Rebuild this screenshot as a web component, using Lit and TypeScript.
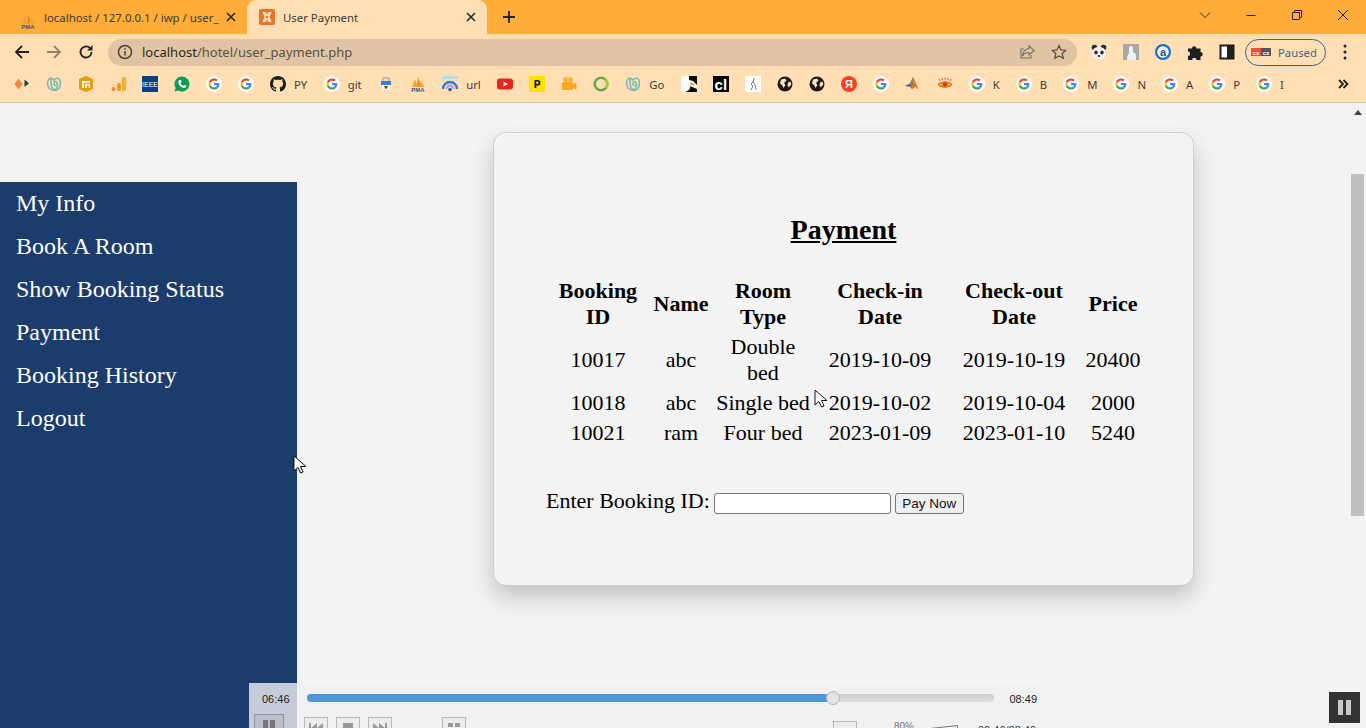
import { LitElement, html, css, svg } from "lit";
import { customElement } from "lit/decorators.js";

const G = html`<svg class="ico" viewBox="0 0 16 16"><circle cx="8" cy="8" r="8" fill="#fff"/><g transform="translate(2.4 2.4) scale(.233)"><path fill="#EA4335" d="M24 9.5c3.54 0 6.71 1.22 9.21 3.6l6.85-6.85C35.9 2.38 30.47 0 24 0 14.62 0 6.51 5.38 2.56 13.22l7.98 6.19C12.43 13.72 17.74 9.5 24 9.5z"/><path fill="#4285F4" d="M46.98 24.55c0-1.57-.15-3.09-.38-4.55H24v9.02h12.94c-.58 2.96-2.26 5.48-4.78 7.18l7.73 6c4.51-4.18 7.09-10.36 7.09-17.65z"/><path fill="#FBBC05" d="M10.53 28.59c-.48-1.45-.76-2.99-.76-4.59s.27-3.14.76-4.59l-7.98-6.19C.92 16.46 0 20.12 0 24c0 3.88.92 7.54 2.56 10.78l7.97-6.19z"/><path fill="#34A853" d="M24 48c6.48 0 11.93-2.13 15.89-5.81l-7.73-6c-2.15 1.45-4.92 2.3-8.16 2.3-6.26 0-11.57-4.22-13.47-9.91l-7.98 6.19C6.51 42.62 14.62 48 24 48z"/></g></svg>`;

const pma = (cls = "ico") => html`<svg class=${cls} viewBox="0 0 16 16"><path d="M2 11 5 3l1.5 5L8 1l2 7 1-4 3 7z" fill="#f5a623"/><path d="M8 1l2 7-2 3z" fill="#e8842a"/><text x="8" y="15.5" font-size="6" font-weight="700" font-family="Liberation Sans" text-anchor="middle" fill="#45507a">PMA</text></svg>`;

const wp = html`<svg class="ico" viewBox="0 0 16 16" fill="none" stroke="#78b9b9" stroke-width="1.6"><path d="M8 14.5C4 14.5 1.5 11 1.5 7.5 1.5 4 3.5 1.8 5.5 2.2 7 2.5 8 4 8 4s1.2-1.6 3-1.8c2.4-.2 3.6 2.2 3.4 5C14.2 11.500 12 14.500 8 14.500z"/><path d="M5.500 2.500C4.500 6 5 11 8 14.500M8 14.500c3-2 3.800-5.500 3-8-.5-1.500-2.500-1.500-3 .5-.3 1.200.5 2.500 1.800 2.500"/></svg>`;

const globe = html`<svg class="ico" viewBox="0 0 16 16"><circle cx="8" cy="8" r="7.500" fill="#1b1b1b"/><path d="M4 3.500 8 2.500l1.500 2-2.500 2.500 1.500 2L6.500 12 5 9 3 7.500zM11 6.500l2.500-1 .8 3-2.500 3-1.300-2.500z" fill="#f6e2c0"/></svg>`;

const icons: Record<string, unknown> = {
  G,
  wp,
  globe,
  pma: pma(),
  diamond: html`<svg class="ico" viewBox="0 0 16 16"><path d="M4.500 2.500 8.500 8 4.500 13.500 .5 8z" fill="#f2883c"/><path d="M10.500 3.500 15 7.500l-4.500 3.500z" fill="#27424a"/></svg>`,
  hex: html`<svg class="ico" viewBox="0 0 16 16"><path d="M8 0 15 3v10l-7 3-7-3V3z" fill="#e39a16"/><path d="M4 5h8v2H6v5H4zM7 8h5v4h-1.300V9.500H9V12H7z" fill="#fff3d8"/></svg>`,
  bars: html`<svg class="ico" viewBox="0 0 16 16"><circle cx="3.500" cy="13" r="2" fill="#f08a2a"/><rect x="7" y="7" width="4" height="8" rx="1.500" fill="#f2992e"/><rect x="12" y="1" width="4" height="14" rx="1.500" fill="#f9ab2d"/></svg>`,
  ieee: html`<span class="ieee">IEEE</span>`,
  wa: html`<svg class="ico" viewBox="0 0 16 16"><path d="M8 .500a7.500 7.500 0 0 0-6.400 11.400L.5 15.500l3.700-1A7.500 7.500 0 1 0 8 .500z" fill="#0b9c55"/><path d="M5.500 4c-.6.300-1.300 1-1.200 2.200.2 2.700 3 5.500 5.700 5.700 1.200.1 1.900-.7 2.200-1.300.1-.4.100-.7 0-.8L10.500 9c-.3-.1-.5-.1-.7.200l-.6.700c-1.300-.5-2.300-1.500-2.800-2.800l.7-.6c.2-.2.300-.4.200-.7L7.100 4.200C6.900 3.900 6 3.800 5.500 4z" fill="#fff"/></svg>`,
  gh: html`<svg class="ico" viewBox="0 0 16 16"><path fill="#1b1f23" d="M8 0C3.580 0 0 3.580 0 8c0 3.540 2.290 6.530 5.470 7.590.4.070.55-.17.55-.38 0-.19-.01-.82-.01-1.490-2.010.37-2.530-.49-2.690-.94-.09-.23-.48-.94-.82-1.130-.28-.15-.68-.52-.01-.53.63-.01 1.080.58 1.230.82.72 1.210 1.870.87 2.330.66.070-.52.28-.87.51-1.070-1.780-.2-3.640-.89-3.640-3.950 0-.87.31-1.590.82-2.150-.08-.2-.36-1.020.08-2.120 0 0 .67-.21 2.200.82.64-.18 1.320-.27 2-.27.68 0 1.360.09 2 .27 1.530-1.040 2.200-.82 2.200-.82.44 1.100.16 1.920.08 2.120.51.56.82 1.270.82 2.150 0 3.070-1.870 3.750-3.650 3.950.29.25.54.73.54 1.480 0 1.070-.01 1.930-.01 2.200 0 .21.15.46.55.38A8.013 8.013 0 0016 8c0-4.420-3.580-8-8-8z"/></svg>`,
  tray: html`<svg class="ico" viewBox="0 0 16 16"><path d="M5 2h6v4H5z" fill="none" stroke="#8b9bb0"/><path d="M3 5h10v4H3z" fill="#3f7fd0"/><path d="M4 9h8v5H4z" fill="#fff"/><path d="M6 10 8 13.500 10 10z" fill="#444"/></svg>`,
  wifi: html`<svg class="ico" viewBox="0 0 16 16"><path d="M0 0h16v3H0z" fill="#bcd7f2"/><path d="M1 13a7 7 0 0 1 14 0" fill="none" stroke="#2f7fd8" stroke-width="2.400"/><path d="M4.500 13a3.500 3.500 0 0 1 7 0" fill="none" stroke="#c58ee0" stroke-width="1.800"/><circle cx="8" cy="13.500" r="1.800" fill="#1e60b8"/></svg>`,
  yt: html`<svg class="ico" viewBox="0 0 16 16"><rect y="2.500" width="16" height="11" rx="3" fill="#f1201c"/><path d="m6.500 5.500 4.500 2.500-4.500 2.500z" fill="#fff"/></svg>`,
  pk: html`<svg class="ico" viewBox="0 0 16 16"><rect width="16" height="16" fill="#ffe000"/><path d="M5.500 4h3.200a2.500 2.500 0 0 1 0 5.500H7.300V12H5.500z M7.300 5.600v2.300h1.200a1.100 1.100 0 0 0 0-2.300z" fill="#111" fill-rule="evenodd"/></svg>`,
  cam: html`<svg class="ico" viewBox="0 0 16 16"><circle cx="4.500" cy="3.500" r="2.500" fill="#f9b233"/><circle cx="9.500" cy="3.500" r="2.500" fill="#f9b233"/><rect x="1" y="6" width="11" height="8" rx="1" fill="#f9a825"/><path d="m12 8 3.500-1.500v7L12 12z" fill="#f9a825"/></svg>`,
  ring: html`<svg class="ico" viewBox="0 0 16 16"><circle cx="8" cy="8" r="6.300" fill="none" stroke="#6aa84f" stroke-width="2.600"/><path d="M12 3a6.300 6.300 0 0 1 1 9" fill="none" stroke="#a5c94f" stroke-width="2.600"/></svg>`,
  bird: html`<svg class="ico" viewBox="0 0 16 16"><rect width="16" height="16" fill="#fff"/><path d="M8 0h8v9l-4-4-4-1zM4 16c3-1 6-3 5-6l7 3v3z" fill="#0c0c0c"/><path d="m9 6 6 3-5 .5z" fill="#e0a030"/></svg>`,
  cl: html`<span class="cl">cl</span>`,
  fig: html`<svg class="ico" viewBox="0 0 16 16"><rect width="16" height="16" fill="#fff"/><path d="M9 2 8 6 6 8l2 2-2 4M8 6l2 3 1 5" fill="none" stroke="#777" stroke-width="1"/></svg>`,
  ya: html`<svg class="ico" viewBox="0 0 16 16"><circle cx="8" cy="8" r="8" fill="#fc3f1d"/><text x="8" y="12" font-size="11.500" font-family="Liberation Sans" font-weight="700" text-anchor="middle" fill="#fff">Я</text></svg>`,
  mat: html`<svg class="ico" viewBox="0 0 16 16"><path d="M0 10 5 7.500 8 1c1.500 2 4 9 6 13-1.500-1-3-3-4-3l-3 2.500-2.500-3z" fill="#e2731f"/><path d="M0 10 5 7.500 6.500 10 4.500 10.500z" fill="#3a6ea8"/><path d="M5 7.500 8 1l-1 9z" fill="#4a8fc0"/></svg>`,
  eye: html`<svg class="ico" viewBox="0 0 16 16"><path d="M1 8.500C4 5 12 5 15 8.500 12 12 4 12 1 8.500z" fill="#f2a33c" stroke="#d9541e"/><circle cx="8" cy="8.500" r="2.200" fill="#c93d12"/><path d="M3 5 2 3M5.500 4 5 2M8 3.500V1.500M10.500 4 11 2M13 5l1-2" stroke="#d9541e" stroke-width="1"/></svg>`,
};

const bookmarks: { i: string; t?: string }[] = [
  { i: "diamond" }, { i: "wp" }, { i: "hex" }, { i: "bars" }, { i: "ieee" }, { i: "wa" }, { i: "G" }, { i: "G" },
  { i: "gh", t: "PY" }, { i: "G", t: "git" }, { i: "tray" }, { i: "pma" }, { i: "wifi", t: "url" }, { i: "yt" },
  { i: "pk" }, { i: "cam" }, { i: "ring" }, { i: "wp", t: "Go" }, { i: "bird" }, { i: "cl" }, { i: "fig" },
  { i: "globe" }, { i: "globe" }, { i: "ya" }, { i: "G" }, { i: "mat" }, { i: "eye" },
  { i: "G", t: "K" }, { i: "G", t: "B" }, { i: "G", t: "M" }, { i: "G", t: "N" }, { i: "G", t: "A" }, { i: "G", t: "P" }, { i: "G", t: "I" },
];

const menu = ["My Info", "Book A Room", "Show Booking Status", "Payment", "Booking History", "Logout"];
const rows = [
  ["10017", "abc", "Double bed", "2019-10-09", "2019-10-19", "20400"],
  ["10018", "abc", "Single bed", "2019-10-02", "2019-10-04", "2000"],
  ["10021", "ram", "Four bed", "2023-01-09", "2023-01-10", "5240"],
];
const cursor = svg`<path d="M1 1v15l4-3.500 2.500 5.500 2.500-1-2.500-5.500H13z" fill="#fff" stroke="#111" stroke-width="1"/>`;

@customElement("app-root")
export class AppRoot extends LitElement {
  static styles = css`
    :host { display: block; width: 1366px; height: 728px; overflow: hidden; position: relative; background: #f3f3f3; font-family: "Liberation Serif", serif; color: #000; }
    * { box-sizing: border-box; }
    .ui { font-family: "Noto Sans", "Open Sans", sans-serif; }
    .tabs { height: 34px; background: #ffac38; display: flex; align-items: stretch; padding-left: 8px; position: relative; }
    .tab { width: 239px; display: flex; align-items: center; font-size: 11.400px; color: #3c3a36; padding: 0 0 0 12px; }
    .tab.active { background: #ffdfb3; border-radius: 9px 9px 0 0; padding-left: 12px; width: 240px; }
    .tab .t { flex: 1; white-space: nowrap; overflow: hidden; margin-left: 8px; }
    .tab .favpma { width: 16px; height: 16px; margin-top: 8px; }
    .tab svg.x { width: 10px; height: 10px; margin-right: 11px; flex: none; }
    .plus { width: 14px; height: 14px; margin: 10px 0 0 15px; }
    .winctl { margin-left: auto; display: flex; align-items: flex-start; }
    .winctl span { width: 46px; height: 30px; display: flex; align-items: center; justify-content: center; }
    .winctl svg { width: 12px; height: 12px; }
    .toolbar { height: 36px; background: #ffdfb3; display: flex; align-items: center; padding-left: 6px; }
    .nav { width: 32px; height: 32px; display: flex; align-items: center; justify-content: center; flex: none; }
    .nav svg { width: 16px; height: 16px; }
    .url { width: 969px; height: 27px; margin: 0 6px 0 6px; border-radius: 14px; background: #e0c4a3; display: flex; align-items: center; padding: 0 10px 0 9px; font-size: 13px; color: #5a5044; flex: none; }
    .url .host { color: #2c2a26; }
    .url .txt { margin-left: 9px; flex: 1; }
    .url svg { width: 16px; height: 16px; flex: none; }
    .url svg.star { margin-left: 16px; }
    .pill { width: 81px; height: 27px; margin-left: 2px; border: 1px solid #3f5f8a; border-radius: 14px; display: flex; align-items: center; padding-left: 5px; gap: 7px; font-size: 11.300px; color: #4a5f80; flex: none; }
    .pill svg { width: 20px; height: 12px; }
    .dots { width: 4px; margin-left: 17px; height: 16px; }
    .bm { height: 33px; background: #ffdfb3; border-bottom: 1px solid #d9c6aa; display: flex; align-items: center; padding: 0 0 4px 6px; position: relative; }
    .b { display: flex; align-items: center; padding: 0 8px; font-size: 11.300px; color: #3c3a36; flex: none; height: 24px; }
    .b .lb { margin-left: 8px; }
    .b .lb.wide { margin-right: .5px; }
    .ico { width: 16px; height: 16px; flex: none; display: block; }
    .ieee { width: 16px; height: 16px; background: #0b3f8c; color: #fff; font: 7px "Liberation Sans", sans-serif; display: flex; align-items: center; justify-content: center; flex: none; }
    .cl { width: 16px; height: 16px; background: #000; color: #fff; font: 700 15px/15px "Liberation Sans", sans-serif; display: flex; align-items: center; justify-content: center; flex: none; }
    .more { position: absolute; right: 17px; top: 8px; width: 12px; height: 12px; }

    .page { height: 625px; display: flex; align-items: flex-start; position: relative; }
    nav.side { width: 297px; height: 546px; margin-top: 79px; background: #1c3c6e; padding: 0 16px; flex: none; }
    nav.side a { display: block; height: 43px; line-height: 43px; color: #fff; font-size: 24px; white-space: nowrap; }
    .card { width: 701px; height: 453px; margin: 29px 0 0 196px; background: #f3f3f4; border: 1px solid #cfcfcf; border-bottom: 0; border-radius: 13px; box-shadow: 0 12px 22px rgba(0,0,0,.2); padding: 81px 0 0 52px; flex: none; }
    h2 { margin: 0 0 29px -52px; font-size: 28px; line-height: 32px; text-align: center; text-decoration: underline; font-weight: 700; }
    table { width: 600px; table-layout: fixed; border-collapse: separate; border-spacing: 2px; font-size: 22px; line-height: 26px; text-align: center; }
    th, td { padding: 1px 0; }
    th { font-weight: 700; }
    .c1 { width: 100px; } .c2 { width: 62px; } .c3 { width: 98px; } .c4 { width: 132px; } .c5 { width: 132px; } .c6 { width: 62px; }
    form { display: flex; align-items: flex-start; margin-top: 39px; font-size: 22px; line-height: 26px; }
    form label { white-space: nowrap; }
    form input { width: 177px; height: 21px; margin: 5px 0 0 4px; border: 1px solid #767676; border-radius: 3px; background: #fff; padding: 0; }
    form button { width: 69px; height: 21px; margin: 5px 0 0 4px; border: 1px solid #767676; border-radius: 3px; background: #efefef; font: 13.500px "Liberation Sans", sans-serif; color: #111; padding: 0; }

    .scroll { position: absolute; right: 0; top: 0; bottom: 0; width: 16px; background: #f2f2f2; display: flex; flex-direction: column; align-items: center; }
    .scroll i { width: 0; height: 0; border: 4px solid transparent; border-top: 0; border-bottom: 5px solid #444; margin-top: 7px; }
    .scroll b { width: 13px; height: 342px; margin-top: 59px; background: #bfbfbf; flex: none; align-self: flex-start; margin-left: 1px; }

    .player { position: absolute; left: 249px; top: 580px; width: 791px; height: 45px; background: rgba(240,240,240,.6); font: 11px "Liberation Sans", sans-serif; color: #1c1c1c; }
    .player .lead { position: absolute; left: 0; top: 0; bottom: 0; width: 48px; background: #c5ccd9; }
    .player .now { position: absolute; left: 13px; top: 10px; }
    .player .end { position: absolute; right: 3px; top: 10px; }
    .track { position: absolute; left: 58px; top: 11px; width: 687px; height: 8px; border-radius: 4px; background: linear-gradient(#ccc, #dcdcdc); }
    .fill { height: 8px; border-radius: 4px 0 0 4px; background: #4f96d9; }
    .knob { position: absolute; top: -3px; width: 14px; height: 14px; margin-left: -8px; border-radius: 50%; background: #e2e2e2; border: 1px solid #b5b5b5; }
    .pb { position: absolute; width: 24px; height: 24px; top: 34px; border: 1px solid #b8b8b8; background: #ececec; display: flex; justify-content: center; padding-top: 5px; }
    .pb svg { width: 16px; height: 10px; }
    .pb.main { left: 5px; width: 30px; top: 31px; background: #b9c0cc; border-color: #8e95a1; }
    .pb.a { left: 55px; } .pb.b2 { left: 87px; } .pb.c { left: 119px; } .pb.d { left: 193px; } .pb.e { left: 584px; top: 38px; }
    .vol { position: absolute; left: 645px; top: 38px; font-size: 10px; color: #777; }
    .tri { position: absolute; left: 681px; top: 41px; width: 28px; height: 10px; }
    .clock { position: absolute; left: 729px; top: 41px; font-size: 11px; color: #333; }
    .pausebox { position: absolute; left: 1329px; top: 589px; width: 31px; height: 31px; background: #333; display: flex; align-items: center; justify-content: center; gap: 3px; }
    .pausebox i { width: 5px; height: 15px; background: #c9c9c9; }
    .cur { position: absolute; width: 14px; height: 20px; }
    .cur.one { left: 293px; top: 352px; }
    .cur.two { left: 814px; top: 286px; }
  `;

  render() {
    const pct = ((6 * 60 + 46) / (8 * 60 + 49)) * 100;
    return html`
      <div class="ui">
        <div class="tabs">
          <div class="tab">
            ${pma("favpma")}
            <span class="t">localhost / 127.0.0.1 / iwp / user_</span>
            <svg class="x" viewBox="0 0 10 10"><path d="M1 1l8 8M9 1 1 9" stroke="#222" stroke-width="1.500"/></svg>
          </div>
          <div class="tab active">
            <svg class="ico" viewBox="0 0 16 16"><rect width="16" height="16" rx="2" fill="#e8742a"/><path d="M3.500 3h3L8 5.500 9.500 3h3L10.500 8l2 5h-3L8 10.500 6.500 13h-3l2-5z" fill="#ffe6c8"/><rect x="6.800" y="6.800" width="2.400" height="2.400" fill="#e8742a"/></svg>
            <span class="t">User Payment</span>
            <svg class="x" viewBox="0 0 10 10"><path d="M1 1l8 8M9 1 1 9" stroke="#222" stroke-width="1.500"/></svg>
          </div>
          <svg class="plus" viewBox="0 0 14 14"><path d="M7 1v12M1 7h12" stroke="#222" stroke-width="1.800"/></svg>
          <div class="winctl">
            <span><svg viewBox="0 0 12 12"><path d="M1 3.500 6 8.500l5-5" fill="none" stroke="#333"/></svg></span>
            <span><svg viewBox="0 0 12 12"><path d="M1.500 6.500h9" stroke="#222"/></svg></span>
            <span><svg viewBox="0 0 12 12"><path d="M1.500 3.500h7v7h-7zM3.500 3.500v-2h7v7h-2" fill="none" stroke="#222"/></svg></span>
            <span><svg viewBox="0 0 12 12"><path d="M1 1l10 10M11 1 1 11" stroke="#222"/></svg></span>
          </div>
        </div>
        <div class="toolbar">
          <span class="nav"><svg viewBox="0 0 16 16"><path d="M15 8H2M8 2 2 8l6 6" fill="none" stroke="#222" stroke-width="1.800"/></svg></span>
          <span class="nav"><svg viewBox="0 0 16 16"><path d="M1 8h13M8 2l6 6-6 6" fill="none" stroke="#8f8474" stroke-width="1.800"/></svg></span>
          <span class="nav"><svg viewBox="0 0 16 16"><path d="M13.500 8A5.500 5.500 0 1 1 11.800 4" fill="none" stroke="#222" stroke-width="1.800"/><path d="M14.500 1v5.500H9z" fill="#222"/></svg></span>
          <div class="url">
            <svg viewBox="0 0 16 16"><circle cx="8" cy="8" r="6.500" fill="none" stroke="#4c4438" stroke-width="1.500"/><path d="M8 7v4.500M8 4.200v1.600" stroke="#4c4438" stroke-width="1.500"/></svg>
            <span class="txt"><span class="host">localhost</span>/hotel/user_payment.php</span>
            <svg viewBox="0 0 16 16"><path d="M10 2l5 4.500-5 4.500V8.500C7 8.500 5 9.500 3.500 12 4 8 6 5 10 4.500zM12 11v3H2V5h3" fill="none" stroke="#7a6f60" stroke-width="1.100"/></svg>
            <svg class="star" viewBox="0 0 16 16"><path d="m8 1.500 2 4.400 4.700.5-3.500 3.200 1 4.700L8 11.900l-4.200 2.400 1-4.700L1.300 6.400 6 5.900z" fill="none" stroke="#5a5044" stroke-width="1.300"/></svg>
          </div>
          <span class="nav"><svg viewBox="0 0 16 16"><circle cx="3.500" cy="3.500" r="2.800" fill="#2a2a2a"/><circle cx="12.500" cy="3.500" r="2.800" fill="#2a2a2a"/><ellipse cx="8" cy="9" rx="7" ry="6.300" fill="#f4f4f4"/><ellipse cx="5" cy="8.500" rx="1.700" ry="2.100" fill="#2a2a2a"/><ellipse cx="11" cy="8.500" rx="1.700" ry="2.100" fill="#2a2a2a"/><ellipse cx="8" cy="12" rx="1.300" ry="1" fill="#2a2a2a"/></svg></span>
          <span class="nav"><svg viewBox="0 0 16 16"><rect width="16" height="16" fill="#a8a8a8"/><path d="M4 16c0-4 1-6 2-7V4a2 2 0 0 1 4 0v4l3 2v6z" fill="#eef1f4"/></svg></span>
          <span class="nav"><svg viewBox="0 0 16 16"><circle cx="8" cy="8" r="8" fill="#1a6fd0"/><circle cx="8" cy="8" r="5.800" fill="#fff"/><text x="8" y="11.500" font-size="11" font-weight="700" font-family="Liberation Sans" text-anchor="middle" fill="#1a4a90">a</text></svg></span>
          <span class="nav"><svg viewBox="0 0 16 16"><path d="M1 4.500h4a2.200 2.200 0 0 1 4.400 0H13.500V8a2.200 2.200 0 0 1 0 4.400V16H9.500a2.200 2.200 0 0 0-4.400 0H1v-4a2.200 2.200 0 0 0 0-4.400z" fill="#1e1e1e"/></svg></span>
          <span class="nav"><svg viewBox="0 0 16 16"><path d="M1.500 1.500h13v13h-13z" fill="#fff" stroke="#1e1e1e" stroke-width="2"/><path d="M8 1.500h6.500v13H8z" fill="#1e1e1e"/></svg></span>
          <div class="pill">
            <svg viewBox="0 0 20 12"><rect y="2" width="10" height="8" fill="#e8503a"/><rect x="10" y="2" width="10" height="8" fill="#555"/><text x="5" y="8.500" font-size="6" font-weight="700" font-family="Liberation Sans" text-anchor="middle" fill="#fff">cx</text><text x="15" y="8.500" font-size="6" font-weight="700" font-family="Liberation Sans" text-anchor="middle" fill="#fff">cx</text></svg>
            <span>Paused</span>
          </div>
          <svg class="dots" viewBox="0 0 4 16"><circle cx="2" cy="2" r="1.500" fill="#222"/><circle cx="2" cy="8" r="1.500" fill="#222"/><circle cx="2" cy="14" r="1.500" fill="#222"/></svg>
        </div>
        <div class="bm">
          ${bookmarks.map((b) => html`<div class="b">${icons[b.i]}${b.t ? html`<span class="lb ${b.t.length > 1 ? "wide" : ""}">${b.t}</span>` : ""}</div>`)}
          <svg class="more" viewBox="0 0 12 12"><path d="M2 2l4 4-4 4M6.500 2l4 4-4 4" fill="none" stroke="#222" stroke-width="1.800"/></svg>
        </div>
      </div>
      <div class="page">
        <nav class="side">${menu.map((m) => html`<a>${m}</a>`)}</nav>
        <section class="card">
          <h2>Payment</h2>
          <table>
            <colgroup><col class="c1"/><col class="c2"/><col class="c3"/><col class="c4"/><col class="c5"/><col class="c6"/></colgroup>
            <thead><tr><th>Booking ID</th><th>Name</th><th>Room Type</th><th>Check-in Date</th><th>Check-out Date</th><th>Price</th></tr></thead>
            <tbody>${rows.map((r) => html`<tr>${r.map((c) => html`<td>${c}</td>`)}</tr>`)}</tbody>
          </table>
          <form>
            <label>Enter Booking ID:</label>
            <input type="text" />
            <button type="button">Pay Now</button>
          </form>
        </section>
        <div class="scroll"><i></i><b></b></div>
        <div class="player">
          <div class="lead"></div>
          <span class="now">06:46</span>
          <div class="track"><div class="fill" style="width:${pct}%"></div><div class="knob" style="left:${pct}%"></div></div>
          <span class="end">08:49</span>
          <div class="pb main"><svg viewBox="0 0 16 10"><path d="M2 0h5v10H2zM9 0h5v10H9z" fill="#777"/></svg></div>
          <div class="pb a"><svg viewBox="0 0 16 10"><path d="M1 0h2v10H1zM9 0v10L3 5zM15 0v10L9 5z" fill="#999"/></svg></div>
          <div class="pb b2"><svg viewBox="0 0 16 10"><path d="M3 0h10v10H3z" fill="#999"/></svg></div>
          <div class="pb c"><svg viewBox="0 0 16 10"><path d="M15 0h-2v10h2zM7 0v10l6-5zM1 0v10l6-5z" fill="#999"/></svg></div>
          <div class="pb d"><svg viewBox="0 0 16 10"><path d="M2 0h5v4H2zM9 0h5v4H9zM2 6h5v4H2zM9 6h5v4H9z" fill="#999"/></svg></div>
          <div class="pb e"><svg viewBox="0 0 16 10"><path d="M2 4h12v6H2z" fill="#bbb"/></svg></div>
          <span class="vol">80%</span>
          <svg class="tri" viewBox="0 0 28 10"><path d="M0.500 4.500 27.500 1.500V10" fill="none" stroke="#777"/></svg>
          <span class="clock">06:46/08:49</span>
        </div>
        <div class="pausebox"><i></i><i></i></div>
        <svg class="cur one" viewBox="0 0 14 20">${cursor}</svg>
        <svg class="cur two" viewBox="0 0 14 20">${cursor}</svg>
      </div>
    `;
  }
}
